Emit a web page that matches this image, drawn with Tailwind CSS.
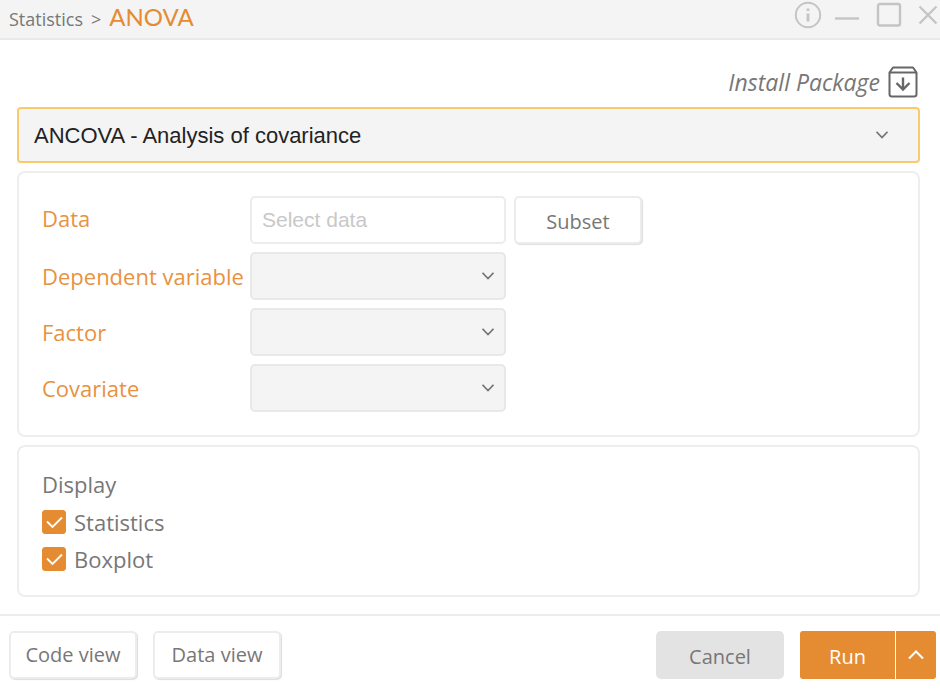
<!DOCTYPE html>
<html lang="en">
<head>
<meta charset="utf-8">
<meta name="viewport" content="width=device-width, initial-scale=1">
<title>ANOVA</title>
<script src="https://cdn.jsdelivr.net/npm/@tailwindcss/browser@4"></script>
</head>
<body class="flex min-h-screen flex-col bg-white font-['Open_Sans','Noto_Sans',sans-serif] text-[22px] leading-7 text-[#777777]">
<header class="flex h-10 shrink-0 items-start justify-between border-b-2 border-[#e9e9e9] bg-[#f4f4f4] pr-[2px] pl-[9px]">
  <nav aria-label="Breadcrumb" class="flex items-baseline gap-2 pt-[3px]">
    <a href="#" class="text-[18px]">Statistics</a>
    <span class="text-[18px]">&gt;</span>
    <h1 class="font-['Lato',sans-serif] text-[24px] leading-7 text-[#e58b32]">ANOVA</h1>
  </nav>
  <div class="flex items-center pt-px text-[#c4c4c4]">
    <button type="button" aria-label="Information" class="mr-3">
      <svg class="block h-7 w-7" viewBox="0 0 28 28" fill="none" stroke="currentColor" stroke-width="2"><circle cx="14" cy="14" r="12.2"/><path d="M14 12.5V20.5M14 7.5V10" stroke-width="2.8"/></svg>
    </button>
    <button type="button" aria-label="Minimize" class="mr-4">
      <svg class="block h-7 w-[26px]" viewBox="0 0 26 28" fill="none" stroke="currentColor" stroke-width="2.4"><path d="M1 17.5H25"/></svg>
    </button>
    <button type="button" aria-label="Maximize" class="mr-4">
      <svg class="block h-7 w-[26px]" viewBox="0 0 26 28" fill="none" stroke="currentColor" stroke-width="2.4"><rect x="2" y="3" width="22" height="21.5" rx="2"/></svg>
    </button>
    <button type="button" aria-label="Close">
      <svg class="block h-7 w-5" viewBox="0 0 20 28" fill="none" stroke="currentColor" stroke-width="2.4"><path d="M1.5 5.5L18.5 22.5M18.5 5.5L1.5 22.5"/></svg>
    </button>
  </div>
</header>

<main class="flex flex-1 flex-col px-[17px] pr-5">
  <div class="flex justify-end pt-[26px] pr-[2px] pb-[9px]">
    <button type="button" class="flex items-center gap-2 text-[23px] italic">
      <span>Install Package</span>
      <svg class="block h-8 w-[30px]" viewBox="0 0 30 32" fill="none" stroke="#666666" stroke-width="2" stroke-linejoin="round"><path d="M1.5 6.5L5 1.5H25L28.5 6.5V28Q28.5 30.5 26 30.5H4Q1.500 30.500 1.500 28Z"/><path d="M1.500 6.500H28.500"/><path d="M15 11.500V24M8.500 17L15 23.500L21.500 17" stroke-width="2.400" stroke-linejoin="miter"/></svg>
    </button>
  </div>

  <div class="relative">
    <select aria-label="Analysis" class="block h-14 w-full appearance-none rounded-[4px] border-2 border-[#fbcb6b] bg-[#f4f4f4] pt-[2px] pr-14 pl-[15px] font-['Liberation_Sans',Arial,sans-serif] text-[22px] text-[#222222]">
      <option>ANCOVA - Analysis of covariance</option>
    </select>
    <svg class="pointer-events-none absolute top-6 right-8 h-2 w-3" viewBox="0 0 12 8" fill="none" stroke="#777777" stroke-width="1.8"><path d="M0.500 0.800L6 6.500L11.500 0.800"/></svg>
  </div>

  <section class="mt-2 grid grid-cols-[200px_256px_1fr] items-center gap-x-2 gap-y-2 rounded-lg border-2 border-[#eeeeee] px-[23px] py-[23px]">
    <label for="data" class="pb-1 text-[#e8923f]">Data</label>
    <input id="data" type="text" placeholder="Select data" class="h-12 w-full rounded-[5px] border-2 border-[#ececec] bg-white px-[10px] font-['Liberation_Sans',Arial,sans-serif] text-[21px] placeholder:text-[#c8c8c8]">
    <button type="button" class="h-12 w-32 rounded-[5px] border-2 border-[#ececec] bg-white pt-1 text-[20px] shadow-[1px_1px_1px_#dddddd]">Subset</button>

    <label for="dependent" class="whitespace-nowrap text-[#e8923f]">Dependent variable</label>
    <div class="relative">
      <select id="dependent" class="block h-12 w-full appearance-none rounded-[5px] border-2 border-[#e8e8e8] bg-[#f4f4f4]"></select>
      <svg class="pointer-events-none absolute top-5 right-3 h-2 w-3" viewBox="0 0 12 8" fill="none" stroke="#777777" stroke-width="1.8"><path d="M0.500 0.800L6 6.500L11.500 0.800"/></svg>
    </div>
    <span></span>

    <label for="factor" class="text-[#e8923f]">Factor</label>
    <div class="relative">
      <select id="factor" class="block h-12 w-full appearance-none rounded-[5px] border-2 border-[#e8e8e8] bg-[#f4f4f4]"></select>
      <svg class="pointer-events-none absolute top-5 right-3 h-2 w-3" viewBox="0 0 12 8" fill="none" stroke="#777777" stroke-width="1.8"><path d="M0.500 0.800L6 6.500L11.500 0.800"/></svg>
    </div>
    <span></span>

    <label for="covariate" class="text-[#e8923f]">Covariate</label>
    <div class="relative">
      <select id="covariate" class="block h-12 w-full appearance-none rounded-[5px] border-2 border-[#e8e8e8] bg-[#f4f4f4]"></select>
      <svg class="pointer-events-none absolute top-5 right-3 h-2 w-3" viewBox="0 0 12 8" fill="none" stroke="#777777" stroke-width="1.8"><path d="M0.500 0.800L6 6.500L11.500 0.800"/></svg>
    </div>
  </section>

  <fieldset class="mt-2 rounded-lg border-2 border-[#eeeeee] px-[23px] pt-[23px] pb-[22px]" aria-labelledby="display-title">
    <h2 id="display-title">Display</h2>
    <div class="mt-[10px] flex flex-col gap-[9px]">
      <label class="flex items-center gap-2">
        <span class="relative block h-6 w-6">
          <input type="checkbox" checked class="peer block h-6 w-6 appearance-none rounded-[3px] border border-[#e58b32] checked:bg-[#e58b32]">
          <svg class="pointer-events-none absolute inset-0 hidden h-6 w-6 peer-checked:block" viewBox="0 0 24 24" fill="none" stroke="#ffffff" stroke-width="1.8"><path d="M5 11.500L10.500 17L20 7.500"/></svg>
        </span>
        Statistics
      </label>
      <label class="flex items-center gap-2">
        <span class="relative block h-6 w-6">
          <input type="checkbox" checked class="peer block h-6 w-6 appearance-none rounded-[3px] border border-[#e58b32] checked:bg-[#e58b32]">
          <svg class="pointer-events-none absolute inset-0 hidden h-6 w-6 peer-checked:block" viewBox="0 0 24 24" fill="none" stroke="#ffffff" stroke-width="1.8"><path d="M5 11.500L10.500 17L20 7.500"/></svg>
        </span>
        Boxplot
      </label>
    </div>
  </fieldset>
</main>

<footer class="flex justify-between border-t-2 border-[#ececec] pt-[15px] pr-1 pb-[10px] pl-[9px] text-[20px]">
  <div class="flex gap-4">
    <button type="button" class="h-12 w-32 rounded-[5px] border-2 border-[#ececec] bg-white shadow-[1px_1px_1px_#dddddd]">Code view</button>
    <button type="button" class="h-12 w-32 rounded-[5px] border-2 border-[#ececec] bg-white shadow-[1px_1px_1px_#dddddd]">Data view</button>
  </div>
  <div class="flex gap-4">
    <button type="button" class="h-12 w-32 rounded-[5px] bg-[#e3e3e3] pt-1">Cancel</button>
    <div class="flex gap-px text-white">
      <button type="button" class="h-12 w-[95px] rounded-l-[3px] bg-[#e58b32] pt-1">Run</button>
      <button type="button" aria-label="More run options" class="flex h-12 w-10 items-center justify-center rounded-r-[3px] bg-[#e58b32]">
        <svg class="block h-[10px] w-4" viewBox="0 0 16 10" fill="none" stroke="currentColor" stroke-width="2"><path d="M1 8.500L8 1.500L15 8.500"/></svg>
      </button>
    </div>
  </div>
</footer>
</body>
</html>
